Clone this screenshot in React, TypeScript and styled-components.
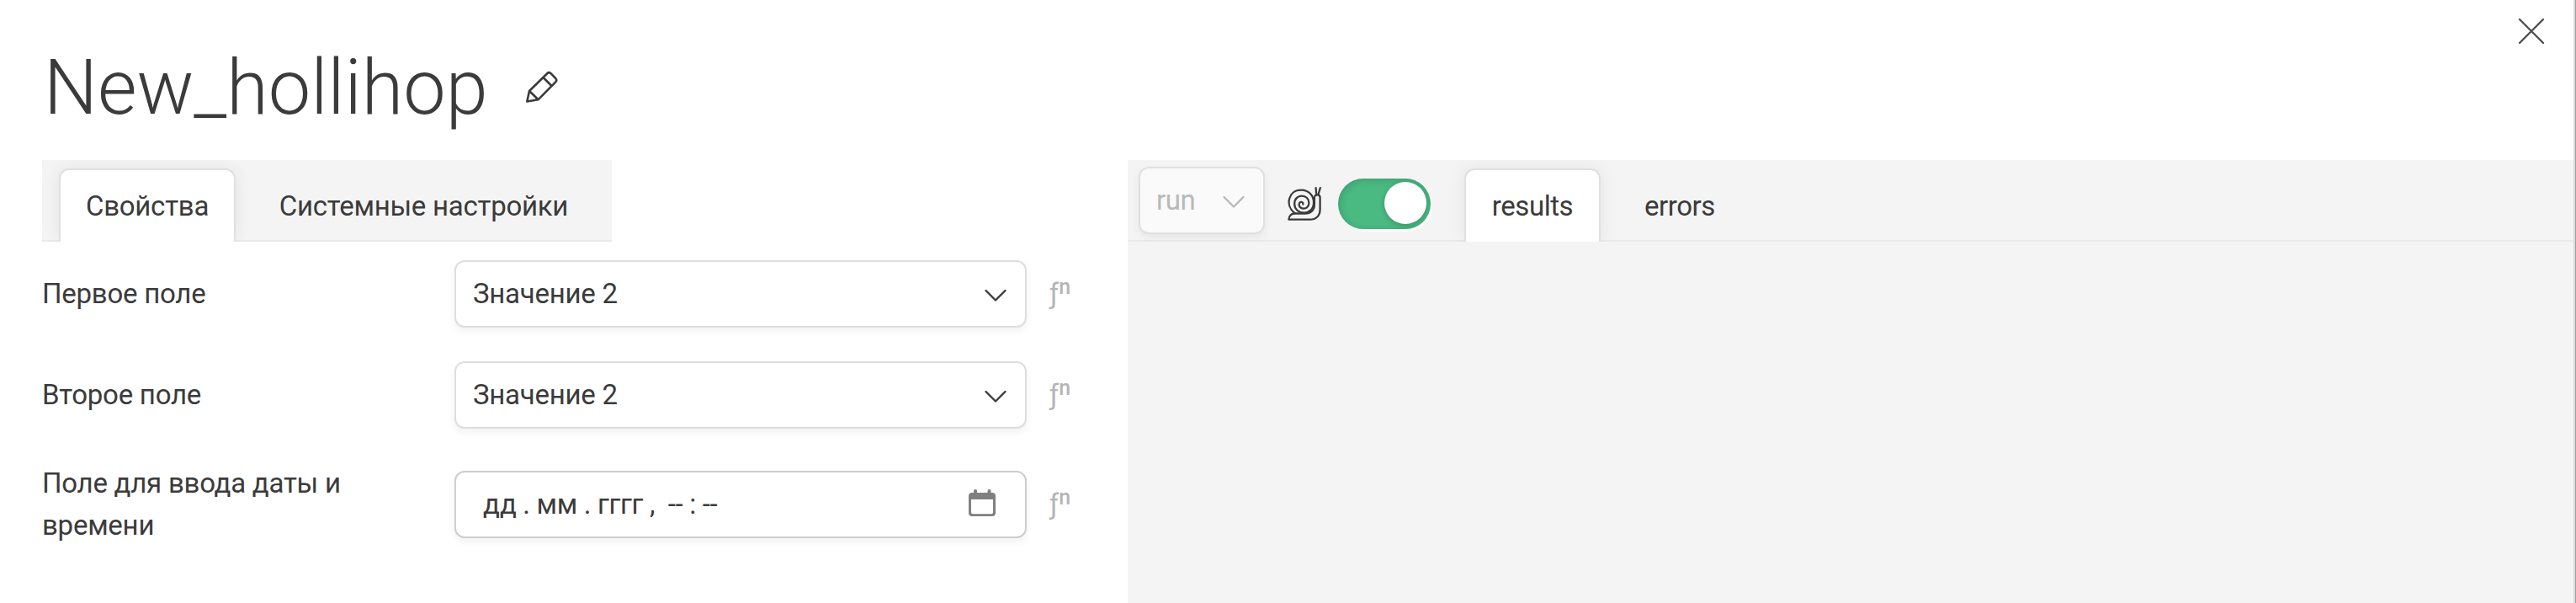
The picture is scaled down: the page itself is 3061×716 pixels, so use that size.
import React from "react";
import styled, { createGlobalStyle } from "styled-components";

const GlobalStyle = createGlobalStyle`
  * { box-sizing: border-box; }
  html, body { margin: 0; background: #fff; overflow: hidden; }
  body, button { font-family: Roboto, "Liberation Sans", sans-serif; font-size: 33px; line-height: 50px; color: #3b3b3b; }
`;

const Window = styled.main`
  display: flex;
  flex-direction: column;
  width: 3061px;
  height: 716px;
  border-right: 1px solid #a0a0a0;
  overflow: hidden;
`;

const Content = styled.div`
  display: flex;
  flex-direction: column;
  flex: 1;
  border-right: 2px solid #dadada;
`;

const Header = styled.header`
  display: flex;
  justify-content: space-between;
  height: 190px;
  flex: none;
  padding: 0 34px 0 52px;
`;

const TitleGroup = styled.div`
  display: flex;
  gap: 44px;
`;

const Title = styled.h1`
  margin: 50px 0 0;
  font-size: 90px;
  font-weight: 300;
  line-height: 110px;
`;

const IconButton = styled.button<{ $top: number }>`
  display: flex;
  align-self: flex-start;
  margin: ${(p) => p.$top}px 0 0;
  padding: 0;
  border: 0;
  background: none;
  color: #3b3b3b;
`;

const Body = styled.div`
  display: flex;
  flex: 1;
`;

const Properties = styled.section`
  flex: none;
  width: 1340px;
  padding-left: 50px;
  letter-spacing: -0.25px;
`;

const Results = styled.section`
  flex: 1;
  background: #f4f4f4;
  letter-spacing: -0.45px;
`;

const TabBar = styled.nav<{ $width?: number; $pad: number }>`
  display: flex;
  align-items: flex-end;
  width: ${(p) => (p.$width ? `${p.$width}px` : "auto")};
  height: 97px;
  padding-left: ${(p) => p.$pad}px;
  background: #f4f4f4;
  box-shadow: inset 0 -2px #e9e9e9;
  overflow: hidden;
`;

const Tab = styled.button<{ $active?: boolean; $width: number }>`
  width: ${(p) => p.$width}px;
  height: 87px;
  padding: 0;
  border: 2px solid ${(p) => (p.$active ? "#e0e0e0" : "transparent")};
  border-bottom: 0;
  border-radius: 12px 12px 0 0;
  background: ${(p) => (p.$active ? "#fff" : "none")};
  box-shadow: ${(p) => (p.$active ? "0 0 20px rgba(0, 0, 0, 0.07)" : "none")};
  letter-spacing: inherit;
  white-space: nowrap;
`;

const Form = styled.div`
  display: flex;
  flex-direction: column;
  padding-top: 22px;
`;

const Row = styled.div<{ $gap?: number }>`
  display: flex;
  align-items: center;
  margin-bottom: ${(p) => p.$gap ?? 0}px;
`;

const Label = styled.label`
  width: 490px;
  padding-right: 90px;
`;

const Field = styled.div<{ $date?: boolean }>`
  display: flex;
  align-items: center;
  justify-content: space-between;
  width: 680px;
  height: 80px;
  padding: ${(p) => (p.$date ? "0 35px 0 32px" : "0 21px 0 20px")};
  border: 2px solid ${(p) => (p.$date ? "#cecece" : "#dedede")};
  border-radius: 12px;
  background: #fff;
  box-shadow: 0 4px 10px rgba(0, 0, 0, 0.06);
`;

const DateText = styled.span`
  display: flex;
  white-space: pre;
  letter-spacing: -0.33px;
`;

const FnMark = styled.span`
  display: flex;
  margin-left: 27px;
  color: #b5b5b5;
  letter-spacing: 0;
`;

const FnPower = styled.span`
  margin: -8px 0 8px 0;
  font-size: 25px;
  font-weight: 500;
`;

const RunButton = styled.button`
  display: flex;
  align-items: center;
  justify-content: space-between;
  width: 150px;
  height: 80px;
  margin: 0 27px 9px 0;
  padding: 0 21px 0 19px;
  border: 2px solid #e0e0e0;
  border-radius: 12px;
  background: #fafafa;
  color: #b9b9b9;
  box-shadow: 0 4px 10px rgba(0, 0, 0, 0.06);
  letter-spacing: inherit;
`;

const SnailSlot = styled.span`
  display: flex;
  margin: 0 20px 25px 0;
`;

const Toggle = styled.span`
  display: flex;
  justify-content: flex-end;
  width: 110px;
  height: 60px;
  margin: 0 40px 15px 0;
  padding: 4px 5px;
  border-radius: 30px;
  background: #4ab982;
  box-shadow: inset 2px 2px 8px rgba(0, 0, 0, 0.14), 2px 3px 1px rgba(255, 255, 255, 0.6);
`;

const Knob = styled.span`
  width: 50px;
  height: 50px;
  border-radius: 50%;
  background: #fff;
  box-shadow: 0 2px 6px rgba(0, 0, 0, 0.2);
`;

const ChevronSvg = styled.svg`
  flex: none;
  margin-top: 4px;
`;

const CalendarSvg = styled.svg`
  flex: none;
  margin-bottom: 4px;
`;

const Chevron = ({ color = "#3b3b3b" }: { color?: string }) => (
  <ChevronSvg width="28" height="16" viewBox="0 0 28 16" fill="none" stroke={color} strokeWidth="2.4" strokeLinecap="round" strokeLinejoin="round">
    <path d="M2.5 2 14 13.5 25.5 2" />
  </ChevronSvg>
);

const Pencil = () => (
  <svg width="40" height="40" viewBox="0 0 40 40" fill="none" stroke="currentColor" strokeWidth="2.6" strokeLinejoin="round">
    <path d="M2.3 36.5 5 24 26.2 3.2Q28.3 1.2 30.5 3.2L36.2 9Q38.2 11.2 36.2 13.3L15.5 34.3ZM5 24 15.5 34.3M21.5 8 31.5 18" />
  </svg>
);

const Close = () => (
  <svg width="32" height="32" viewBox="0 0 32 32" stroke="#4f4f4f" strokeWidth="2.4" strokeLinecap="round">
    <path d="M2 2 30 30M30 2 2 30" />
  </svg>
);

const Snail = () => (
  <svg width="40" height="40" viewBox="0 0 40 40" fill="none" stroke="#3b3b3b" strokeWidth="2.3" strokeLinejoin="round" strokeLinecap="round">
    <path d="M1.4 38.7H26.5C34 38.7 38.6 34 38.6 27V12.5C38.6 8.3 31.9 8.3 31.9 12.5V21C31.9 28 27 31.5 21 31.5H8.5C4.5 31.5 1.4 34.5 1.4 38.7Z" />
    <path d="M8.5 31C-3.5 22 1 3.6 16 3.6C25.5 3.6 31 10.5 31 18.5C31 26 26 30.6 19.5 30.6C12.5 30.6 8.2 25.8 8.2 20C8.2 14 12 10.7 16.8 10.7C22 10.7 25.4 14.2 25.4 19C25.4 28.5 11.7 26.8 13.9 19.5C15 16.8 18.8 17.6 18.3 20.5" />
    <path d="M34.2 9 33.6 1.2M36.5 9 38.8 1.2" />
  </svg>
);

const Calendar = () => (
  <CalendarSvg width="32" height="32" viewBox="0 0 32 32">
    <path fill="#808080" fillRule="evenodd" d="M6 4V2a2 2 0 0 1 4 0V4H22.5V2a2 2 0 0 1 4 0V4H28a4 4 0 0 1 4 4V28a4 4 0 0 1-4 4H4a4 4 0 0 1-4-4V8a4 4 0 0 1 4-4ZM3 12V27a2 2 0 0 0 2 2.2H27a2 2 0 0 0 2-2.2V12Z" />
  </CalendarSvg>
);

const Fn = () => (
  <FnMark>
    ƒ<FnPower>n</FnPower>
  </FnMark>
);

const selects = [
  { label: "Первое поле", value: "Значение 2", gap: 40 },
  { label: "Второе поле", value: "Значение 2", gap: 40 },
];

export default function App() {
  return (
    <>
      <GlobalStyle />
      <Window>
        <Content>
          <Header>
            <TitleGroup>
              <Title>New_hollihop</Title>
              <IconButton $top={84} aria-label="edit">
                <Pencil />
              </IconButton>
            </TitleGroup>
            <IconButton $top={21} aria-label="close">
              <Close />
            </IconButton>
          </Header>
          <Body>
            <Properties>
              <TabBar $width={677} $pad={20}>
                <Tab $active $width={210}>Свойства</Tab>
                <Tab $width={447}>Системные настройки</Tab>
              </TabBar>
              <Form>
                {selects.map((s) => (
                  <Row key={s.label} $gap={s.gap}>
                    <Label>{s.label}</Label>
                    <Field>
                      {s.value}
                      <Chevron />
                    </Field>
                    <Fn />
                  </Row>
                ))}
                <Row>
                  <Label>Поле для ввода даты и времени</Label>
                  <Field $date>
                    <DateText>дд . мм . гггг ,  -- : --</DateText>
                    <Calendar />
                  </Field>
                  <Fn />
                </Row>
              </Form>
            </Properties>
            <Results>
              <TabBar $pad={13}>
                <RunButton>
                  run
                  <Chevron color="#b9b9b9" />
                </RunButton>
                <SnailSlot>
                  <Snail />
                </SnailSlot>
                <Toggle>
                  <Knob />
                </Toggle>
                <Tab $active $width={162}>results</Tab>
                <Tab $width={188}>errors</Tab>
              </TabBar>
            </Results>
          </Body>
        </Content>
      </Window>
    </>
  );
}
